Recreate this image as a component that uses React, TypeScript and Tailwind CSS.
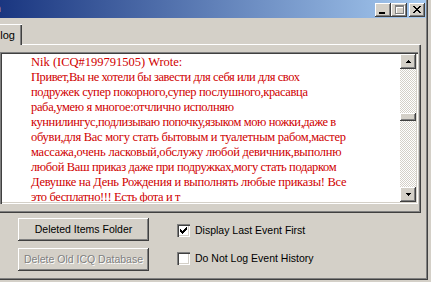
import React from "react";

const lines: [string, string][] = [
  ["Nik (ICQ#199791505) Wrote:", "tracking-[0px]"],
  ["Привет,Вы не хотели бы завести для себя или для свох", "tracking-[-0.44px]"],
  ["подружек супер покорного,супер послушного,красавца", "tracking-[-0.35px]"],
  ["раба,умею я многое:отчлично исполняю", "tracking-[-0.34px]"],
  ["куннилингус,подлизываю попочку,языком мою ножки,даже в", "tracking-[-0.41px]"],
  ["обуви,для Вас могу стать бытовым и туалетным рабом,мастер", "tracking-[-0.28px]"],
  ["массажа,очень ласковый,обслужу любой девичник,выполню", "tracking-[-0.24px]"],
  ["любой Ваш приказ даже при подружках,могу стать подарком", "tracking-[-0.37px]"],
  ["Девушке на День Рождения и выполнять любые приказы! Все", "tracking-[-0.28px]"],
  ["это бесплатно!!! Есть фота и т", "tracking-[-0.4px]"],
];

const raised =
  "bg-[#d4d0c8] shadow-[inset_-1px_-1px_#404040,inset_1px_1px_#ffffff,inset_-2px_-2px_#808080,inset_2px_2px_#d4d0c8]";
const sunken =
  "bg-white shadow-[inset_1px_1px_#808080,inset_2px_2px_#404040,inset_-1px_-1px_#ffffff,inset_-2px_-2px_#d4d0c8]";

function Arrow({ up }: { up: boolean }) {
  return (
    <svg width="5" height="3" viewBox="0 0 5 3" shapeRendering="crispEdges">
      <path
        d={up ? "M2 0h1v1H2z M1 1h3v1H1z M0 2h5v1H0z" : "M0 0h5v1H0z M1 1h3v1H1z M2 2h1v1H2z"}
        fill="#000"
      />
    </svg>
  );
}

function Check() {
  return (
    <svg width="7" height="7" viewBox="0 0 7 7" shapeRendering="crispEdges">
      <path
        d="M0 2h1v3H0z M1 3h1v3H1z M2 4h1v3H2z M3 3h1v3H3z M4 2h1v3H4z M5 1h1v3H5z M6 0h1v3H6z"
        fill="#000"
      />
    </svg>
  );
}

export default function App() {
  return (
    <div
      className="w-[431px] h-[282px] bg-[#d4d0c8] overflow-hidden"
      style={{ fontFamily: '"Liberation Sans", Arial, sans-serif' }}
    >
      <div className="w-[428px] h-[280px] flex flex-col shadow-[inset_-1px_-1px_#404040,inset_-2px_-2px_#808080]">
        {/* Title bar */}
        <div className="w-[426px] h-[18px] shrink-0 flex items-start bg-[linear-gradient(to_right,#1a3680,#a6caf0)] pr-[1px]">
          <span className="-ml-[6px] mt-[2px] text-white font-bold text-[11px] leading-[13px]">n</span>
          <div className="flex-1" />
          <div className="flex mt-[3px]">
            <div className={`w-[16px] h-[14px] ${raised}`}>
              <svg width="16" height="14" viewBox="0 0 16 14" shapeRendering="crispEdges">
                <path d="M4 9h6v2H4z" fill="#000" />
              </svg>
            </div>
            <div className={`w-[16px] h-[14px] ${raised}`}>
              <svg width="16" height="14" viewBox="0 0 16 14" shapeRendering="crispEdges">
                <path d="M4 2h9v2H4z M4 4h1v7H4z M12 4h1v7H12z M4 10h9v1H4z" fill="#ffffff" transform="translate(1 1)" />
                <path d="M4 2h9v2H4z M4 4h1v7H4z M12 4h1v7H12z M4 10h9v1H4z" fill="#808080" />
              </svg>
            </div>
            <div className={`ml-[2px] w-[16px] h-[14px] ${raised}`}>
              <svg width="16" height="14" viewBox="0 0 16 14" shapeRendering="crispEdges">
                <path
                  d="M4 3h2v1H4z M10 3h2v1H10z M5 4h2v1H5z M9 4h2v1H9z M6 5h4v1H6z M7 6h2v1H7z M6 7h4v1H6z M5 8h2v1H5z M9 8h2v1H9z M4 9h2v1H4z M10 9h2v1H10z"
                  fill="#000"
                />
              </svg>
            </div>
          </div>
        </div>

        {/* Tab row */}
        <div className="mt-[6px] w-[421px] h-[21px] shrink-0 flex items-end">
          <div className="w-[22px] h-[21px] flex items-center justify-end pr-[7px] border-t border-white shadow-[inset_-1px_0_#404040,inset_-2px_0_#808080]">
            <span className="text-[11px] leading-[13px] text-black">log</span>
          </div>
          <div className="flex-1 h-[1px] bg-white mr-[1px]" />
        </div>

        {/* Panel */}
        <div className="w-[421px] h-[168px] shrink-0 pt-[7px] shadow-[inset_-1px_-1px_#404040,inset_-2px_-2px_#808080]">
          <div className={`w-[418px] h-[152px] p-[2px] flex ${sunken}`}>
            <div
              className="flex-1 h-[148px] overflow-hidden pl-[29px] pt-[1px] text-[12.5px] leading-[15px] text-[#d00000]"
              style={{ fontFamily: '"Liberation Serif", "Times New Roman", serif' }}
            >
              {lines.map(([l, t], i) => (
                <div key={i} className={`whitespace-nowrap ${t}`}>
                  {l}
                </div>
              ))}
            </div>
            <div className="w-[16px] h-[148px] flex flex-col">
              <div className={`h-[15px] shrink-0 flex items-center justify-center ${raised}`}>
                <Arrow up />
              </div>
              <div className="flex-1 bg-[repeating-conic-gradient(#d4d0c8_0_25%,#ffffff_0_50%)] bg-[length:2px_2px]">
                <div className={`mt-[44px] h-[8px] ${raised}`} />
              </div>
              <div className={`h-[15px] shrink-0 flex items-center justify-center ${raised}`}>
                <Arrow up={false} />
              </div>
            </div>
          </div>
        </div>

        {/* Bottom controls */}
        <div className="flex items-start pl-[18px] text-[10.5px] text-black">
          <div className="flex flex-col gap-[7px] pt-[5px]">
            <div className={`w-[131px] h-[23px] flex items-center justify-center ${raised}`}>
              Deleted Items Folder
            </div>
            <div className={`w-[131px] h-[23px] flex items-center justify-center ${raised}`}>
              <span className="text-[#808080] [text-shadow:1px_1px_0_#ffffff]">Delete Old ICQ Database</span>
            </div>
          </div>
          <div className="ml-[28px] pt-[11px] flex flex-col gap-[15px]">
            <div className="flex items-center h-[13px]">
              <div className={`w-[13px] h-[13px] flex items-center justify-center ${sunken}`}>
                <Check />
              </div>
              <span className="ml-[5px] leading-[13px]">Display Last Event First</span>
            </div>
            <div className="flex items-center h-[13px]">
              <div className={`w-[13px] h-[13px] ${sunken}`} />
              <span className="ml-[5px] leading-[13px]">Do Not Log Event History</span>
            </div>
          </div>
        </div>
      </div>
    </div>
  );
}
